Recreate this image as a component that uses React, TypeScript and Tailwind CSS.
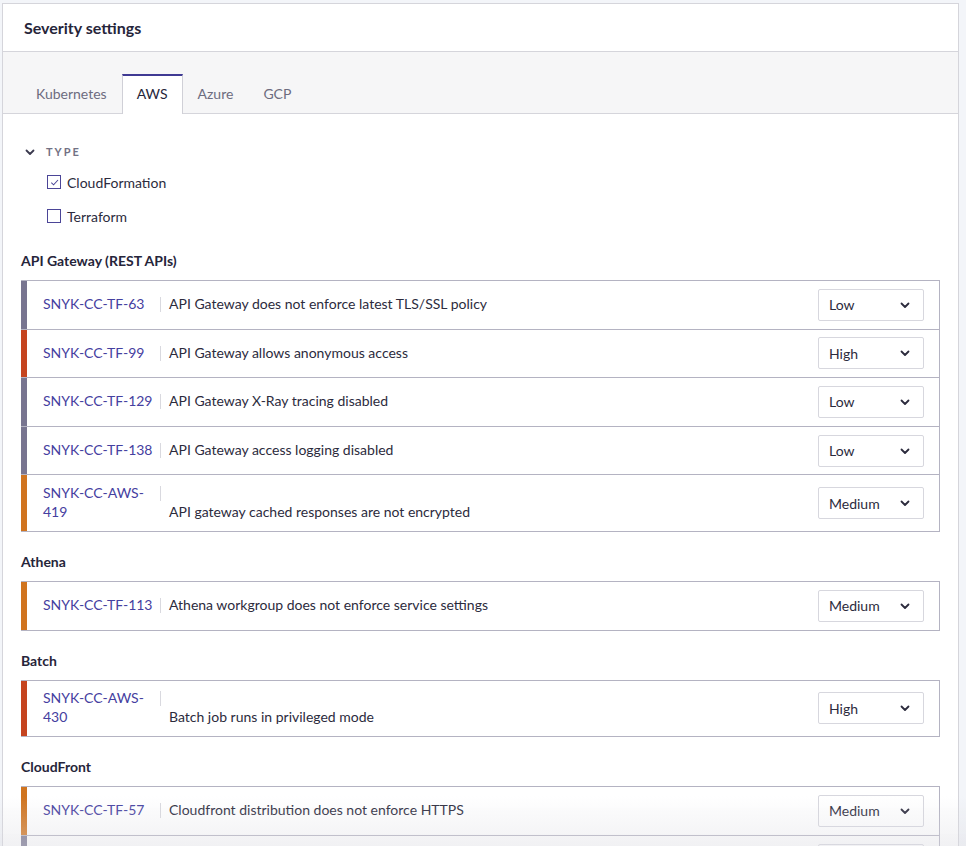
import { useState } from "react"

type Severity = "Low" | "Medium" | "High"

interface Rule {
  id: string
  title: string
  severity: Severity
}

interface Group {
  name: string
  rules: Rule[]
}

const groups: Group[] = [
  {
    name: "API Gateway (REST APIs)",
    rules: [
      { id: "SNYK-CC-TF-63", title: "API Gateway does not enforce latest TLS/SSL policy", severity: "Low" },
      { id: "SNYK-CC-TF-99", title: "API Gateway allows anonymous access", severity: "High" },
      { id: "SNYK-CC-TF-129", title: "API Gateway X-Ray tracing disabled", severity: "Low" },
      { id: "SNYK-CC-TF-138", title: "API Gateway access logging disabled", severity: "Low" },
      { id: "SNYK-CC-AWS-419", title: "API gateway cached responses are not encrypted", severity: "Medium" },
    ],
  },
  {
    name: "Athena",
    rules: [
      { id: "SNYK-CC-TF-113", title: "Athena workgroup does not enforce service settings", severity: "Medium" },
    ],
  },
  {
    name: "Batch",
    rules: [
      { id: "SNYK-CC-AWS-430", title: "Batch job runs in privileged mode", severity: "High" },
    ],
  },
  {
    name: "CloudFront",
    rules: [
      { id: "SNYK-CC-TF-57", title: "Cloudfront distribution does not enforce HTTPS", severity: "Medium" },
      { id: "SNYK-CC-TF-58", title: "CloudFront distribution access logging disabled", severity: "Low" },
    ],
  },
]

const barColor: Record<Severity, string> = {
  Low: "bg-[#787590]",
  Medium: "bg-[#d0741f]",
  High: "bg-[#c5441f]",
}

const tabs = ["Kubernetes", "AWS", "Azure", "GCP"]

function ChevronDown({ className }: { className?: string }) {
  return (
    <svg viewBox="0 0 12 12" className={className} fill="none" stroke="currentColor" strokeWidth="1.8" strokeLinecap="round" strokeLinejoin="round">
      <path d="M2.5 4.5 6 8l3.5-3.5" />
    </svg>
  )
}

function Checkbox({ checked, label, onToggle }: { checked: boolean; label: string; onToggle: () => void }) {
  return (
    <label className="flex items-center gap-[6px] h-[20px] cursor-pointer" onClick={onToggle}>
      <span className="w-[14px] h-[14px] border border-[#4b4597] bg-white flex items-center justify-center">
        {checked && (
          <svg viewBox="0 0 12 12" className="w-[11px] h-[11px] text-[#4b4597]" fill="none" stroke="currentColor" strokeWidth="1.1">
            <path d="M2.5 6.2 5 8.6 9.8 3.3" />
          </svg>
        )}
      </span>
      <span className="text-[14px] text-[#2c2b3d]">{label}</span>
    </label>
  )
}

function RuleRow({ rule }: { rule: Rule }) {
  return (
    <div className="flex items-stretch border-b border-[#b4b3c2] last:border-b-0">
      {/* severity bar */}
      <div className={`w-[6px] shrink-0 ${barColor[rule.severity]}`} />
      <div className="flex flex-1 items-center py-[7.8px] pl-[16px] pr-[15px]">
        <div className="flex flex-1 items-end pb-[2px]">
          <a className="w-[112px] shrink-0 text-[14px] leading-[19px] text-[#4540a0]">
            {rule.id}
          </a>
          <span className="self-start mt-[3px] ml-[5px] w-px h-[15px] bg-[#d9d9df] shrink-0" />
          <span className="ml-[8px] text-[14px] leading-[19px] text-[#2c2b3d]">{rule.title}</span>
        </div>
        <button className="w-[106px] h-[32px] border border-[#d7d7de] rounded-[2px] bg-white flex items-center justify-between pl-[10px] pr-[12px] text-[14px] text-[#2c2b3d]">
          {rule.severity}
          <ChevronDown className="w-[12px] h-[12px] text-[#2c2b3d]" />
        </button>
      </div>
    </div>
  )
}

export default function App() {
  const [activeTab, setActiveTab] = useState("AWS")
  const [types, setTypes] = useState({ cloudformation: true, terraform: false })

  return (
    <div className="min-h-screen bg-[#f3f5f9] pl-[2px] pt-[3px] pr-[7px] font-['Lato','Noto_Sans',sans-serif]">
      <div className="bg-white border border-[#d5d5db]">
        {/* Header */}
        <div className="h-[48px] flex items-center pl-[21px] border-b border-[#d5d5db]">
          <h2 className="text-[16px] font-bold text-[#26253a]">Severity settings</h2>
        </div>

        {/* Tabs */}
        <div className="bg-[#f6f6f7] pt-[22px] pl-[18px] border-b border-[#d5d5db] flex">
          {tabs.map((tab) => {
            const active = tab === activeTab
            return (
              <button
                key={tab}
                onClick={() => setActiveTab(tab)}
                className={
                  active
                    ? "h-[40px] -mb-px px-[14px] pb-[3px] bg-white border-t-2 border-t-[#3f3a93] border-x border-x-[#d0d0d7] text-[14px] text-[#26253a]"
                    : "h-[40px] -mb-px px-[15px] pb-[3px] border-t-2 border-transparent text-[14px] text-[#6d6c7f]"
                }
              >
                {tab}
              </button>
            )
          })}
        </div>

        {/* Content */}
        <div className="px-[18px] pt-[28px] pb-10">
          <div className="flex items-center gap-[10px] pl-[3px] h-[20px]">
            <ChevronDown className="w-[12px] h-[12px] text-[#3b3a4f]" />
            <span className="text-[11px] font-bold tracking-[2px] text-[#727184]">TYPE</span>
          </div>
          <div className="pl-[26px] mt-[10px] flex flex-col gap-[14px]">
            <Checkbox
              checked={types.cloudformation}
              label="CloudFormation"
              onToggle={() => setTypes({ ...types, cloudformation: !types.cloudformation })}
            />
            <Checkbox
              checked={types.terraform}
              label="Terraform"
              onToggle={() => setTypes({ ...types, terraform: !types.terraform })}
            />
          </div>

          <div className="mt-[25px] flex flex-col gap-[20px]">
            {groups.map((group) => (
              <section key={group.name}>
                <h3 className="text-[14px] font-bold leading-[20px] text-[#26253a]">{group.name}</h3>
                <div className="mt-[9px] border border-l-0 border-[#b4b3c2]">
                  {group.rules.map((rule) => (
                    <RuleRow key={rule.id} rule={rule} />
                  ))}
                </div>
              </section>
            ))}
          </div>
        </div>
      </div>

      {/* bottom fade */}
      <div className="fixed bottom-0 left-0 right-0 h-[50px] pointer-events-none bg-gradient-to-b from-white/0 to-[#dcdce2]/40" />
    </div>
  )
}
